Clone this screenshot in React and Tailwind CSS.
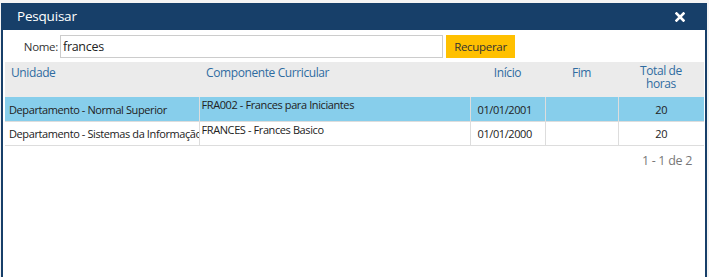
import React from "react";

const rows = [
  { unidade: "Departamento - Normal Superior", componente: "FRA002 - Frances para Iniciantes", inicio: "01/01/2001", fim: "", horas: "20", selected: true },
  { unidade: "Departamento - Sistemas da Informação", componente: "FRANCES - Frances Basico", inicio: "01/01/2000", fim: "", horas: "20", selected: false },
];

export default function App() {
  return (
    <div className="w-[709px] h-[277px] overflow-hidden bg-[#f4f4f4] pt-[3px] pl-[1px]" style={{ fontFamily: '"Open Sans", "Noto Sans", sans-serif' }}>
      <div className="w-[706px] h-[290px] bg-white border-2 border-t-0 border-[#173f69] flex flex-col">
        {/* Title bar */}
        <div className="h-[27px] -mx-[2px] bg-[#173f69] flex items-center justify-between pl-[16px] pr-[22px]">
          <span className="text-white text-[13.5px] tracking-[-0.2px] leading-none">Pesquisar</span>
          <svg width="10" height="10" viewBox="0 0 10 10">
            <path d="M1.5 1.5 L8.5 8.5 M8.5 1.5 L1.5 8.5" stroke="white" strokeWidth="2.6" strokeLinecap="square" />
          </svg>
        </div>

        {/* Search row */}
        <div className="h-[32px] flex items-center pt-[1px]">
          <label className="w-[57px] text-right pr-[2px] text-[11.5px] tracking-[-0.3px] text-[#333]">Nome:</label>
          <input
            readOnly
            value="frances"
            className="w-[383px] h-[23px] border border-[#cccccc] px-[2px] text-[12.5px] tracking-[-0.3px] text-[#222] outline-none"
            style={{ fontFamily: '"Open Sans", "Noto Sans", sans-serif' }}
          />
          <button className="ml-[3px] w-[69px] h-[23px] bg-[#ffc000] text-[11.5px] tracking-[-0.3px] text-[#333]">Recuperar</button>
        </div>

        {/* Table */}
        <div className="px-[2px]">
          <table className="w-[699px] border-collapse table-fixed">
            <colgroup>
              <col className="w-[194px]" />
              <col className="w-[271px]" />
              <col className="w-[75px]" />
              <col className="w-[73px]" />
              <col className="w-[86px]" />
            </colgroup>
            <thead>
              <tr className="h-[35px] bg-[#ebebeb] text-[#2f6ca1] align-top text-[12px] tracking-[-0.4px]">
                <th className="font-normal text-left pl-[6px] pt-[2px]">Unidade</th>
                <th className="font-normal text-left pl-[7px] pt-[2px]">Componente Curricular</th>
                <th className="font-normal text-center pt-[2px]">Início</th>
                <th className="font-normal text-center pt-[2px]">Fim</th>
                <th className="font-normal text-center pt-[2px] leading-[13px]">Total de<br />horas</th>
              </tr>
            </thead>
            <tbody>
              {rows.map((r, i) => (
                <tr key={i} className={`h-[24px] text-[#222] text-[11px] tracking-[-0.4px] border-b border-[#dddddd] ${r.selected ? "bg-[#87ceeb]" : "bg-white"}`}>
                  <td className="pl-[4px] border-r border-[#dddddd] whitespace-nowrap overflow-hidden pt-[2px]">{r.unidade}</td>
                  <td className="pl-[2px] border-r border-[#dddddd] align-top whitespace-nowrap overflow-hidden">{r.componente}</td>
                  <td className="pl-[7px] border-r border-[#dddddd] pt-[2px]">{r.inicio}</td>
                  <td className="border-r border-[#dddddd]">{r.fim}</td>
                  <td className="text-center pt-[2px]">{r.horas}</td>
                </tr>
              ))}
            </tbody>
          </table>
        </div>

        {/* Pagination */}
        <div className="text-right pr-[13px] pt-[6px] text-[12.5px] tracking-[-0.3px] text-[#777]">1 - 1 de 2</div>
      </div>
    </div>
  );
}
